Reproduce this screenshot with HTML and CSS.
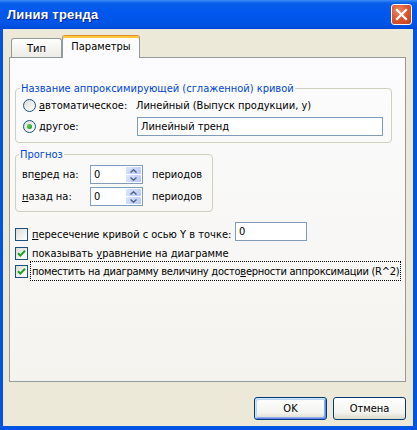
FILE: index.html
```html
<!DOCTYPE html>
<html>
<head>
<meta name="viewport" content="width=device-width, initial-scale=1">
<link rel="stylesheet" href="styles.css">
</head>
<body>

<div class="window">
  <div class="titlebar">
    <span class="title">Линия тренда</span>
    <span class="close">
      <svg width="19" height="19" viewBox="0 0 19 19"><path d="M5 5 L14 14 M14 5 L5 14" stroke="#fff" stroke-width="2.2" stroke-linecap="square"/></svg>
    </span>
  </div>

  <div class="client">
    <div class="tabs">
      <div class="tab tab-type">Тип</div>
      <div class="tab tab-active">Параметры</div>
    </div>

    <div class="panel">
      <fieldset class="group group-name">
        <legend>Название аппроксимирующей (сглаженной) кривой</legend>
        <div class="radio-row first">
          <span class="radio"></span>
          <span class="rlabel"><u>а</u>втоматическое:</span>
          <span>Линейный (Выпуск продукции, у)</span>
        </div>
        <div class="radio-row second">
          <span class="radio on"></span>
          <span class="rlabel"><u>д</u>ругое:</span>
          <input class="text-input name-input" type="text" value="Линейный тренд">
        </div>
      </fieldset>

      <fieldset class="group group-forecast">
        <legend>Прогноз</legend>
        <div class="spin-row first">
          <span class="slabel">вп<u>е</u>ред на:</span>
          <div class="spin">
            <span class="spin-value">0</span>
            <div class="spin-btns">
              <span class="spin-btn"><svg width="7" height="4" viewBox="0 0 7 4"><path d="M0.5 3.5 L3.5 0.8 L6.5 3.5" fill="none" stroke="#4d6185" stroke-width="1.4"/></svg></span>
              <span class="spin-btn"><svg width="7" height="4" viewBox="0 0 7 4"><path d="M0.5 0.5 L3.5 3.2 L6.5 0.5" fill="none" stroke="#4d6185" stroke-width="1.4"/></svg></span>
            </div>
          </div>
          <span class="unit">периодов</span>
        </div>
        <div class="spin-row second">
          <span class="slabel"><u>н</u>азад на:</span>
          <div class="spin">
            <span class="spin-value">0</span>
            <div class="spin-btns">
              <span class="spin-btn"><svg width="7" height="4" viewBox="0 0 7 4"><path d="M0.5 3.5 L3.5 0.8 L6.5 3.5" fill="none" stroke="#4d6185" stroke-width="1.4"/></svg></span>
              <span class="spin-btn"><svg width="7" height="4" viewBox="0 0 7 4"><path d="M0.5 0.5 L3.5 3.2 L6.5 0.5" fill="none" stroke="#4d6185" stroke-width="1.4"/></svg></span>
            </div>
          </div>
          <span class="unit">периодов</span>
        </div>
      </fieldset>

      <div class="check-row row-cross">
        <span class="check"></span>
        <span class="clabel cross-label"><u>п</u>ересечение кривой с осью Y в точке:</span>
        <input class="text-input cross-input" type="text" value="0">
      </div>
      <div class="check-row row-eq">
        <span class="check on"><svg width="11" height="11" viewBox="0 0 11 11"><path d="M2 5.2 L4.3 7.6 L9 2.8" fill="none" stroke="#21a121" stroke-width="2"/></svg></span>
        <span class="clabel">показывать <u>у</u>равнение на диаграмме</span>
      </div>
      <div class="check-row row-r2">
        <span class="check on"><svg width="11" height="11" viewBox="0 0 11 11"><path d="M2 5.2 L4.3 7.6 L9 2.8" fill="none" stroke="#21a121" stroke-width="2"/></svg></span>
        <span class="clabel focus">поместить на диаграмму величину досто<u>в</u>ерности аппроксимации (R^2)</span>
      </div>
    </div>

    <div class="buttons">
      <button type="button" class="btn btn-default">OK</button>
      <button type="button" class="btn">Отмена</button>
    </div>
  </div>
</div>

</body>
</html>
```

FILE: styles.css
```css
body {
  margin: 0;
  font-family: "DejaVu Sans Condensed", Tahoma, sans-serif;
  font-size: 11px;
  color: #000;
}

* {
  box-sizing: border-box;
}

.window {
  width: 417px;
  height: 430px;
  display: flex;
  flex-direction: column;
  background: #0054e3;
}

.titlebar {
  height: 29px;
  display: flex;
  align-items: center;
  justify-content: space-between;
  padding: 0 5px 0 7px;
  background: linear-gradient(#3c8cf8 0, #0a5fe8 3px, #0058ee 40%, #0055e5 85%, #0046d6 100%);
}

.title {
  color: #fff;
  font-family: "Liberation Sans", Arial, sans-serif;
  font-weight: bold;
  font-size: 13px;
  text-shadow: 1px 1px #0a1e8c;
  letter-spacing: 0.2px;
}

.close {
  width: 21px;
  height: 21px;
  border: 1px solid #fff;
  border-radius: 3px;
  background: radial-gradient(circle at 35% 30%, #ec8a6a 0, #dc5a32 45%, #c23f1a 100%);
  display: flex;
  align-items: center;
  justify-content: center;
}

.client {
  flex: 1;
  margin: 0 4px 4px 3px;
  background: #ece9d8;
  padding: 6px 7px 6px 6px;
  display: flex;
  flex-direction: column;
}

/* tabs */
.tabs {
  height: 22px;
  display: flex;
  align-items: flex-end;
  padding-left: 2px;
  position: relative;
  z-index: 1;
}

.tab {
  height: 19px;
  border: 1px solid #919b9c;
  border-bottom: none;
  border-radius: 3px 3px 0 0;
  background: linear-gradient(#fefefe, #ecebe6);
  display: flex;
  align-items: center;
  justify-content: center;
}

.tab-type {
  width: 51px;
}

.tab-active {
  width: 78px;
  height: 23px;
  margin-bottom: -1px;
  background: #fcfcfe;
  border-top: 1px solid #e68b2c;
  box-shadow: inset 0 2px 0 #ffc83c;
  padding-bottom: 1px;
}

.panel {
  height: 325px;
  border: 1px solid #919b9c;
  background: linear-gradient(#fcfcfe, #f4f3ee);
  padding: 0 5px;
}

/* group boxes */
.group {
  margin: 0;
  min-width: 0;
  border: 1px solid #d0d0bf;
  border-radius: 4px;
}

.group legend {
  color: #0046d5;
  line-height: 13px;
  padding: 0 1px;
  margin-left: -3px;
}

.group-name {
  width: 377px;
  margin-top: 24px;
  padding: 0 6px 6px 7px;
}

.group-forecast {
  width: 198px;
  margin-top: 5px;
  padding: 0 6px 5px 6px;
}

.radio-row {
  height: 19px;
  display: flex;
  align-items: center;
}

.radio-row.first {
  margin-top: 1px;
}

.radio-row.second {
  margin-top: 2px;
}

.radio {
  width: 13px;
  height: 13px;
  border: 1px solid #1c5180;
  border-radius: 50%;
  background: linear-gradient(135deg, #dcdcd7, #fff);
  margin-right: 3px;
  display: flex;
  align-items: center;
  justify-content: center;
}

.radio.on::after {
  content: "";
  width: 5px;
  height: 5px;
  border-radius: 50%;
  background: radial-gradient(circle at 35% 35%, #55d451, #21a121 70%);
}

.rlabel {
  width: 97px;
}

.text-input {
  height: 19px;
  border: 1px solid #7f9db9;
  background: #fff;
  font-family: inherit;
  font-size: 11px;
  padding: 0 3px;
  margin: 0;
  outline: none;
}

.name-input {
  width: 246px;
  margin-left: 1px;
}

/* spinners */
.spin-row {
  height: 19px;
  display: flex;
  align-items: center;
}

.spin-row.first {
  margin-top: 4px;
}

.spin-row.second {
  margin-top: 3px;
}

.slabel {
  width: 68px;
}

.spin {
  width: 53px;
  height: 19px;
  border: 1px solid #7f9db9;
  background: #fff;
  display: flex;
  padding: 1px;
}

.spin-value {
  flex: 1;
  padding-left: 2px;
  line-height: 15px;
}

.spin-btns {
  width: 15px;
  display: flex;
  flex-direction: column;
  gap: 1px;
}

.spin-btn {
  flex: 1;
  border-radius: 1px;
  background: linear-gradient(135deg, #dbe5fc, #b6c8f6);
  display: flex;
  align-items: center;
  justify-content: center;
}

.unit {
  margin-left: 9px;
}

/* check boxes */
.check-row {
  display: flex;
  align-items: center;
  white-space: nowrap;
}

.row-cross {
  margin-top: 10px;
  align-items: flex-end;
}

.row-eq {
  margin-top: 6px;
}

.row-r2 {
  margin-top: 1px;
}

.check {
  flex: none;
  width: 13px;
  height: 13px;
  border: 1px solid #1c5180;
  background: linear-gradient(135deg, #dcdcd7, #fff);
  margin-right: 4px;
  display: flex;
  align-items: center;
  justify-content: center;
}

.row-r2 .check {
  margin-right: 2px;
}

.clabel {
  line-height: 13px;
  white-space: nowrap;
}

.cross-label {
  width: 203px;
}

.cross-input {
  width: 72px;
}

.focus {
  flex: none;
  border: 1px dotted #000;
  padding: 3px 1px 2px 1px;
  letter-spacing: -0.25px;
}

/* buttons */
.buttons {
  display: flex;
  justify-content: flex-end;
  gap: 6px;
  margin-top: 15px;
}

.btn {
  width: 73px;
  height: 23px;
  border: 1px solid #003c74;
  border-radius: 3px;
  background: linear-gradient(#ffffff, #f3f3ef 70%, #dcd8cc);
  font-family: inherit;
  font-size: 11px;
  color: #000;
  padding: 0;
}

.btn-default {
  box-shadow: inset 1px 1px #cee7ff, inset -1px -1px #6982ee, inset 2px 2px #bcd4f6, inset -2px -2px #89ade4;
}
```
